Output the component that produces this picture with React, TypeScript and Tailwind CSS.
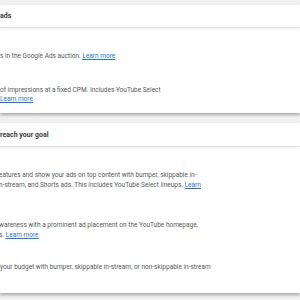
import React from 'react'

function LearnMore({ label = 'Learn more' }: { label?: string }) {
  return <span className="text-[#1a73e8] underline">{label}</span>
}

function Card({ title, headerH, children }: { title: string; headerH: string; children: React.ReactNode }) {
  return (
    <div className="bg-white shadow-[0_2px_3px_rgba(0,0,0,0.3)]">
      <div className={`${headerH} flex items-center pt-[1px] border-b border-[#e3e3e3] shadow-[0_1px_2px_rgba(0,0,0,0.08)]`}>
        <span className="text-[7px] font-bold text-[#3c4043]">{title}</span>
      </div>
      {children}
    </div>
  )
}

export default function App() {
  return (
    <div
      className="w-[300px] h-[300px] overflow-hidden bg-[#f1f1f1] pt-[5px]"
      style={{ fontFamily: 'Roboto, "Liberation Sans", Arial, sans-serif' }}
    >
      <Card title="ads" headerH="h-[23px]">
        <div className="h-[85px] text-[6.5px] leading-[9.5px] text-[#55595e]">
          <p className="pt-[24px]">
            s in the Google Ads auction. <LearnMore />
          </p>
          <p className="pt-[24px]">
            of impressions at a fixed CPM. Includes YouTube Select
            <br />
            <LearnMore />
          </p>
        </div>
      </Card>

      <div className="h-[10px]" />

      <Card title="reach your goal" headerH="h-[24px]">
        <div className="h-[146px] text-[6.5px] leading-[9.5px] text-[#55595e]">
          <p className="pt-[24px] ml-[-1px]">
            eatures and show your ads on top content with bumper, skippable in-
            <br />
            n-stream, and Shorts ads. This includes YouTube Select lineups. <LearnMore label="Learn" />
          </p>
          <p className="pt-[31px] ml-[-1px]">
            wareness with a prominent ad placement on the YouTube homepage,
            <br />
            s. <LearnMore />
          </p>
          <p className="pt-[23px]">
            your budget with bumper, skippable in-stream, or non-skippable in-stream
          </p>
        </div>
      </Card>
    </div>
  )
}
